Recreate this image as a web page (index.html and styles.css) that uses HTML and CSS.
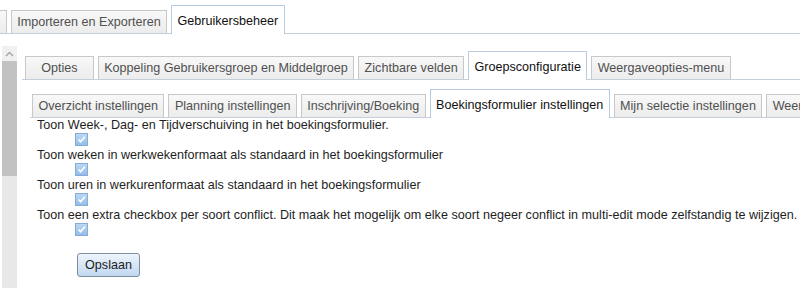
FILE: index.html
```html
<!DOCTYPE html>
<html lang="nl">
<head>
<meta charset="utf-8">
<title>Gebruikersbeheer</title>
<link rel="stylesheet" href="styles.css">
</head>
<body>
<ul class="tabs tabs-top">
  <li class="tab tab-partial"></li>
  <li class="tab">Importeren en Exporteren</li>
  <li class="tab active">Gebruikersbeheer</li>
</ul>
<div class="main">
  <div class="scrollbar">
    <div class="sb-arrow">
      <svg width="9" height="6" viewBox="0 0 9 6"><path d="M1 5 L4.5 1.5 L8 5" fill="none" stroke="#a3a3a3" stroke-width="1.3"/></svg>
    </div>
    <div class="sb-thumb"></div>
    <div class="sb-track"></div>
  </div>
  <div class="content">
    <ul class="tabs tabs-second">
      <li class="tab tab-wide">Opties</li>
      <li class="tab">Koppeling Gebruikersgroep en Middelgroep</li>
      <li class="tab">Zichtbare velden</li>
      <li class="tab active">Groepsconfiguratie</li>
      <li class="tab">Weergaveopties-menu</li>
    </ul>
    <div class="panel">
      <ul class="tabs tabs-third">
        <li class="tab">Overzicht instellingen</li>
        <li class="tab">Planning instellingen</li>
        <li class="tab">Inschrijving/Boeking</li>
        <li class="tab active">Boekingsformulier instellingen</li>
        <li class="tab">Mijn selectie instellingen</li>
        <li class="tab">Weer</li>
      </ul>
      <div class="settings">
        <div class="setting">
          <div class="setting-label">Toon Week-, Dag- en Tijdverschuiving in het boekingsformulier.</div>
          <span class="check"><svg width="11" height="11" viewBox="0 0 11 11"><path d="M2.5 5.5 L4.6 7.8 L8.8 2.8" fill="none" stroke="#ffffff" stroke-width="1.6"/></svg></span>
        </div>
        <div class="setting">
          <div class="setting-label">Toon weken in werkwekenformaat als standaard in het boekingsformulier</div>
          <span class="check"><svg width="11" height="11" viewBox="0 0 11 11"><path d="M2.5 5.5 L4.6 7.8 L8.8 2.8" fill="none" stroke="#ffffff" stroke-width="1.6"/></svg></span>
        </div>
        <div class="setting">
          <div class="setting-label">Toon uren in werkurenformaat als standaard in het boekingsformulier</div>
          <span class="check"><svg width="11" height="11" viewBox="0 0 11 11"><path d="M2.5 5.5 L4.6 7.8 L8.8 2.8" fill="none" stroke="#ffffff" stroke-width="1.6"/></svg></span>
        </div>
        <div class="setting">
          <div class="setting-label">Toon een extra checkbox per soort conflict. Dit maak het mogelijk om elke soort negeer conflict in multi-edit mode zelfstandig te wijzigen.</div>
          <span class="check"><svg width="11" height="11" viewBox="0 0 11 11"><path d="M2.5 5.5 L4.6 7.8 L8.8 2.8" fill="none" stroke="#ffffff" stroke-width="1.6"/></svg></span>
        </div>
        <button class="btn" type="button">Opslaan</button>
      </div>
    </div>
  </div>
</div>
</body>
</html>
```
FILE: styles.css
```css
html, body {
  margin: 0;
  padding: 0;
  background: #ffffff;
  overflow: hidden;
}
body {
  font-family: "Liberation Sans", Arial, sans-serif;
  font-size: 12.6px;
  color: #1e1e1e;
  width: 800px;
  height: 288px;
}
.tabs {
  display: flex;
  align-items: flex-end;
  gap: 4px;
  list-style: none;
  margin: 0;
  padding: 0;
  border-bottom: 1px solid #c5cfdc;
  white-space: nowrap;
}
.tab {
  flex: none;
  line-height: 14px;
  padding: 4px 5.4px;
  border: 1px solid #c8c8c8;
  border-bottom: none;
  background: linear-gradient(#f8f8f8, #ececec);
  color: #505050;
}
.tab.active {
  background: #ffffff;
  border-color: #b7cbe3;
  color: #111111;
  padding-top: 8px;
  padding-bottom: 6px;
  margin-bottom: -1px;
}
.tab-partial {
  width: 0;
  height: 14px;
  margin-left: -6px;
}
.tab-wide {
  min-width: 56px;
  text-align: center;
}
.tabs-top {
  margin-top: 5px;
}
.main {
  display: flex;
  margin-top: 12px;
}
.scrollbar {
  flex: none;
  width: 15px;
  margin-left: 2px;
  display: flex;
  flex-direction: column;
  height: 242px;
}
.sb-arrow {
  height: 15px;
  background: #f0f0f0;
  display: flex;
  align-items: center;
  justify-content: center;
}
.sb-thumb {
  height: 115px;
  background: #c2c2c2;
}
.sb-track {
  flex: 1;
  background: #e8e8e8;
}
.content {
  flex: 1;
  margin-left: 5px;
  padding-top: 5px;
  min-width: 0;
}
.tabs-second {
  padding-left: 3px;
}
.panel {
  padding: 9px 0 0 8px;
}
.tabs-third {
  padding-left: 2px;
}
.settings {
  padding-left: 7px;
}
.setting-label {
  line-height: 15px;
  white-space: nowrap;
}
.check {
  display: flex;
  align-items: center;
  justify-content: center;
  width: 11px;
  height: 11px;
  margin-left: 38px;
  margin-bottom: 2px;
  border: 1px solid #86acd6;
  background: linear-gradient(#bcd8f4, #93bde8);
}
.btn {
  display: block;
  margin: 17px 0 0 40px;
  width: 63px;
  height: 24px;
  padding: 0;
  font-family: inherit;
  font-size: 12.6px;
  color: #1e1e1e;
  border: 1px solid #7d8ea2;
  border-radius: 3px;
  background: linear-gradient(#edf4fc, #c1d8f0);
}
```
